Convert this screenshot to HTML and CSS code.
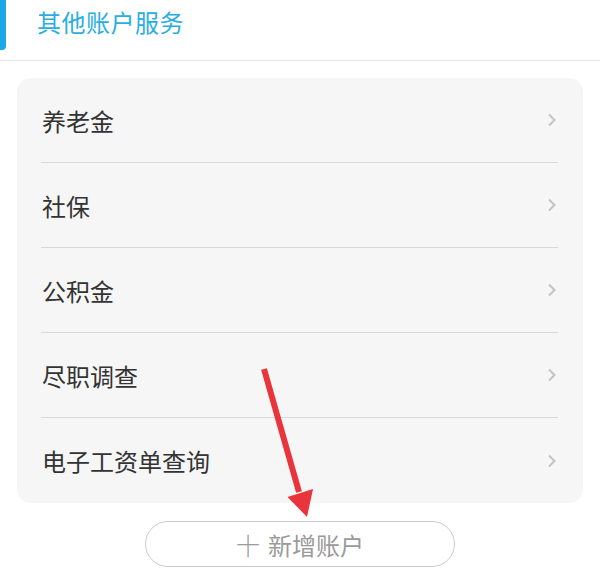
FILE: index.html
```html
<!DOCTYPE html>
<html lang="zh">
<head>
<meta charset="utf-8">
<link rel="stylesheet" href="styles.css">
</head>
<body>
<div class="page">
  <header class="header">
    <span class="bar"></span>
    <h1 class="title">其他账户服务</h1>
  </header>
  <div class="card">
    <div class="row"><div class="row-inner"><span class="label">养老金</span><svg class="chev" viewBox="0 0 10 14" width="10" height="14"><path d="M2 1.5 L7.5 7 L2 12.5" fill="none" stroke="#c2c2c2" stroke-width="2"/></svg></div></div>
    <div class="row"><div class="row-inner"><span class="label">社保</span><svg class="chev" viewBox="0 0 10 14" width="10" height="14"><path d="M2 1.5 L7.5 7 L2 12.5" fill="none" stroke="#c2c2c2" stroke-width="2"/></svg></div></div>
    <div class="row"><div class="row-inner"><span class="label">公积金</span><svg class="chev" viewBox="0 0 10 14" width="10" height="14"><path d="M2 1.5 L7.5 7 L2 12.5" fill="none" stroke="#c2c2c2" stroke-width="2"/></svg></div></div>
    <div class="row"><div class="row-inner"><span class="label">尽职调查</span><svg class="chev" viewBox="0 0 10 14" width="10" height="14"><path d="M2 1.5 L7.5 7 L2 12.5" fill="none" stroke="#c2c2c2" stroke-width="2"/></svg></div></div>
    <div class="row"><div class="row-inner"><span class="label">电子工资单查询</span><svg class="chev" viewBox="0 0 10 14" width="10" height="14"><path d="M2 1.5 L7.5 7 L2 12.5" fill="none" stroke="#c2c2c2" stroke-width="2"/></svg></div></div>
  </div>
  <div class="btn-wrap">
    <div class="add-btn"><span class="plus">十</span>新增账户</div>
  </div>
  <svg class="arrow" width="600" height="576" viewBox="0 0 600 576">
    <line x1="264" y1="369" x2="299" y2="492" stroke="#e8343a" stroke-width="6"/>
    <polygon points="307,517 287.5,497 313,489" fill="#e8343a"/>
  </svg>
</div>
</body>
</html>
```
FILE: styles.css
```css
html, body {
  margin: 0;
  padding: 0;
  background: #ffffff;
}
body {
  font-family: "Noto Sans CJK SC", "Noto Sans", sans-serif;
  color: #333333;
}
.page {
  position: relative;
  width: 600px;
  height: 576px;
  overflow: hidden;
}
.header {
  display: flex;
  align-items: flex-start;
  height: 60px;
  border-bottom: 1px solid #e6e6e6;
}
.bar {
  display: block;
  width: 6px;
  height: 50px;
  background: #1ba8e8;
  border-radius: 0 0 4px 0;
}
.title {
  margin: 0 0 0 31px;
  font-size: 24px;
  font-weight: normal;
  line-height: 44px;
  color: #2aaee2;
  letter-spacing: 0.5px;
}
.card {
  margin: 17px 17px 0 17px;
  background: #f6f6f6;
  border-radius: 14px;
}
.row {
  padding: 0 25px 0 24px;
}
.row-inner {
  display: flex;
  align-items: center;
  justify-content: space-between;
  height: 85px;
  border-bottom: 1px solid #d9d9d9;
  box-sizing: border-box;
}
.row:last-child .row-inner {
  border-bottom: none;
}
.label {
  font-size: 24px;
  color: #333333;
  padding-left: 1px;
}
.chev {
  margin-right: 1px;
}
.btn-wrap {
  display: flex;
  justify-content: center;
  margin-top: 18px;
}
.add-btn {
  width: 310px;
  height: 46px;
  box-sizing: border-box;
  border: 1.5px solid #cccccc;
  border-radius: 23px;
  display: flex;
  align-items: center;
  justify-content: center;
  font-size: 24px;
  color: #9a9a9a;
}
.plus {
  font-weight: 300;
  margin-right: 8px;
}
.arrow {
  position: absolute;
  left: 0;
  top: 0;
  pointer-events: none;
}
```
